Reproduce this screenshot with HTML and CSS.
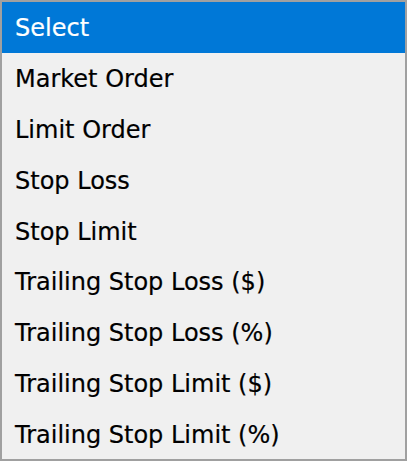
FILE: index.html
```html
<!DOCTYPE html>
<html>
<head>
<meta charset="utf-8">
<link rel="stylesheet" href="styles.css">
</head>
<body>
<div class="list">
  <div class="item selected">Select</div>
  <div class="item">Market Order</div>
  <div class="item">Limit Order</div>
  <div class="item">Stop Loss</div>
  <div class="item">Stop Limit</div>
  <div class="item">Trailing Stop Loss ($)</div>
  <div class="item">Trailing Stop Loss (%)</div>
  <div class="item">Trailing Stop Limit ($)</div>
  <div class="item">Trailing Stop Limit (%)</div>
</div>
</body>
</html>
```
FILE: styles.css
```css
html, body {
  margin: 0;
  padding: 0;
  width: 407px;
  height: 461px;
  overflow: hidden;
}
.list {
  box-sizing: border-box;
  width: 407px;
  height: 461px;
  border: 2px solid #a0a0a0;
  background: #f0f0f0;
  display: flex;
  flex-direction: column;
  font-family: "DejaVu Sans", sans-serif;
  font-size: 24px;
  color: #000;
}
.item {
  flex: 1;
  display: flex;
  align-items: center;
  padding-left: 13px;
  padding-top: 2px;
  white-space: nowrap;
  -webkit-text-stroke: 0.2px currentColor;
}
.selected {
  background: #0078d7;
  color: #fff;
}
```
